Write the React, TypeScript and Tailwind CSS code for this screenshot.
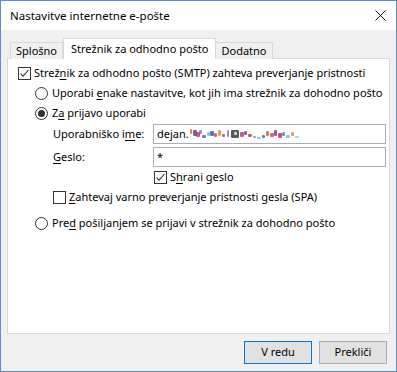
import React from "react";

const font = { fontFamily: '"Noto Sans", "Open Sans", Arial, sans-serif' };

function Check({ checked }: { checked?: boolean }) {
  return (
    <div className="w-[13px] h-[13px] border border-[#333333] bg-white flex items-center justify-center shrink-0">
      {checked && (
        <svg width="11" height="11" viewBox="0 0 11 11">
          <path d="M1.5 5.5 L4 8.2 L9.5 2" fill="none" stroke="#333" strokeWidth="1.1" />
        </svg>
      )}
    </div>
  );
}

function Radio({ checked }: { checked?: boolean }) {
  return (
    <div className="w-[13px] h-[13px] rounded-full border border-[#333333] bg-white flex items-center justify-center shrink-0">
      {checked && <div className="w-[7px] h-[7px] rounded-full bg-[#333333]" />}
    </div>
  );
}

function U({ children }: { children: React.ReactNode }) {
  return <span className="underline underline-offset-2">{children}</span>;
}

function Scribble() {
  const dots: [number, number, number, number, string][] = [
    [0, 1, 2, 5, "#b07030"],
    [3, 2, 4, 6, "#6a2d8f"],
    [6, 4, 4, 5, "#c03050"],
    [9, 2, 3, 4, "#9060c0"],
    [12, 7, 4, 3, "#4060c0"],
    [17, 4, 3, 4, "#80a0e0"],
    [20, 3, 4, 5, "#3050b0"],
    [24, 5, 3, 4, "#d04040"],
    [28, 2, 3, 6, "#e08030"],
    [32, 6, 3, 3, "#a04080"],
    [37, 2, 2, 7, "#9060c0"],
    [41, 2, 8, 8, "#303030"],
    [44, 4, 3, 3, "#ffffff"],
    [50, 4, 4, 5, "#c03070"],
    [54, 3, 3, 4, "#7030a0"],
    [58, 6, 4, 3, "#d03030"],
    [63, 8, 3, 2, "#6080d0"],
    [67, 9, 4, 2, "#90b0e0"],
    [72, 7, 3, 3, "#3050b0"],
    [76, 3, 3, 5, "#c06030"],
    [80, 5, 4, 4, "#d04060"],
    [84, 2, 3, 6, "#7030a0"],
    [88, 5, 4, 5, "#b03030"],
    [92, 4, 3, 4, "#4080d0"],
    [96, 7, 4, 3, "#80b0e0"],
    [101, 4, 3, 4, "#e08030"],
    [105, 8, 4, 2, "#a0c0e8"],
  ];
  return (
    <svg width="110" height="13" viewBox="0 0 110 13" className="ml-[1px]">
      {dots.map(([x, y, w, h, c], i) => (
        <rect key={i} x={x} y={y} width={w} height={h} fill={c} opacity={0.8} rx={1.2} />
      ))}
    </svg>
  );
}

export default function App() {
  return (
    <div style={font} className="w-[397px] h-[372px] border border-[#5d8ec9] bg-[#f0f0f0] flex flex-col text-[11px] text-black overflow-hidden whitespace-nowrap">
      {/* title bar */}
      <div className="h-[29px] bg-white flex items-center justify-between pl-[9px] pr-[10px] shrink-0">
        <span className="text-[11.5px]">Nastavitve internetne e-pošte</span>
        <svg width="11" height="11" viewBox="0 0 11 11">
          <path d="M0.5 0.5 L10.5 10.5 M10.5 0.5 L0.5 10.5" stroke="#111" strokeWidth="1" />
        </svg>
      </div>
      {/* body */}
      <div className="flex-1 flex flex-col px-[6px]">
        {/* tabs */}
        <div className="flex items-end h-[21px] mt-[8px] pl-[3px] relative z-10">
          <div className="h-[17px] px-[5px] border border-[#d9d9d9] border-b-0 bg-[#f0f0f0] flex items-center">Splošno</div>
          <div className="h-[21px] px-[7px] border border-[#d9d9d9] border-b-0 bg-white flex items-center">Strežnik za odhodno pošto</div>
          <div className="h-[17px] px-[5px] border border-[#d9d9d9] border-b-0 border-l-0 bg-[#f0f0f0] flex items-center">Dodatno</div>
        </div>
        {/* panel */}
        <div className="h-[276px] -mt-px bg-white border border-[#d9d9d9] pt-[4px] pl-[10px] pr-[1px] flex flex-col">
          <div className="h-[20px] flex items-center gap-[3px]">
            <Check checked />
            <span>Strež<U>n</U>ik za odhodno pošto (SMTP) zahteva preverjanje pristnosti</span>
          </div>
          <div className="pl-[17px] flex flex-col">
            <div className="h-[20px] flex items-center gap-[4px]">
              <Radio />
              <span>Uporabi <U>e</U>nake nastavitve, kot jih ima strežnik za dohodno pošto</span>
            </div>
            <div className="h-[20px] flex items-center gap-[4px]">
              <Radio checked />
              <span>Z<U>a</U> prijavo uporabi</span>
            </div>
            <div className="pl-[18px] flex flex-col">
              <div className="flex items-center h-[20px] mt-[1px]">
                <span className="w-[100px]">Uporabniško i<U>m</U>e:</span>
                <div className="w-[233px] h-[20px] border border-[#abadb3] bg-white flex items-center pl-[3px]">
                  <span>dejan.</span>
                  <Scribble />
                </div>
              </div>
              <div className="flex items-center h-[20px] mt-[3px]">
                <span className="w-[100px]"><U>G</U>eslo:</span>
                <div className="w-[233px] h-[20px] border border-[#abadb3] bg-white flex items-center pl-[3px]">
                  <span>*</span>
                </div>
              </div>
              <div className="h-[19px] flex items-center gap-[3px] pl-[101px] mt-[1px]">
                <Check checked />
                <span>S<U>h</U>rani geslo</span>
              </div>
              <div className="h-[20px] flex items-center gap-[3px]">
                <Check />
                <span><U>Z</U>ahtevaj varno preverjanje pristnosti gesla (SPA)</span>
              </div>
            </div>
            <div className="h-[20px] flex items-center gap-[4px] mt-[6px]">
              <Radio />
              <span>Pre<U>d</U> pošiljanjem se prijavi v strežnik za dohodno pošto</span>
            </div>
          </div>
        </div>
        {/* buttons */}
        <div className="flex justify-end gap-[7px] mt-[7px] pr-[3px]">
          <button className="w-[68px] h-[23px] border border-[#0078d7] bg-[#e1e1e1] flex items-center justify-center">V redu</button>
          <button className="w-[68px] h-[23px] border border-[#adadad] bg-[#e1e1e1] flex items-center justify-center">Prekliči</button>
        </div>
      </div>
    </div>
  );
}
